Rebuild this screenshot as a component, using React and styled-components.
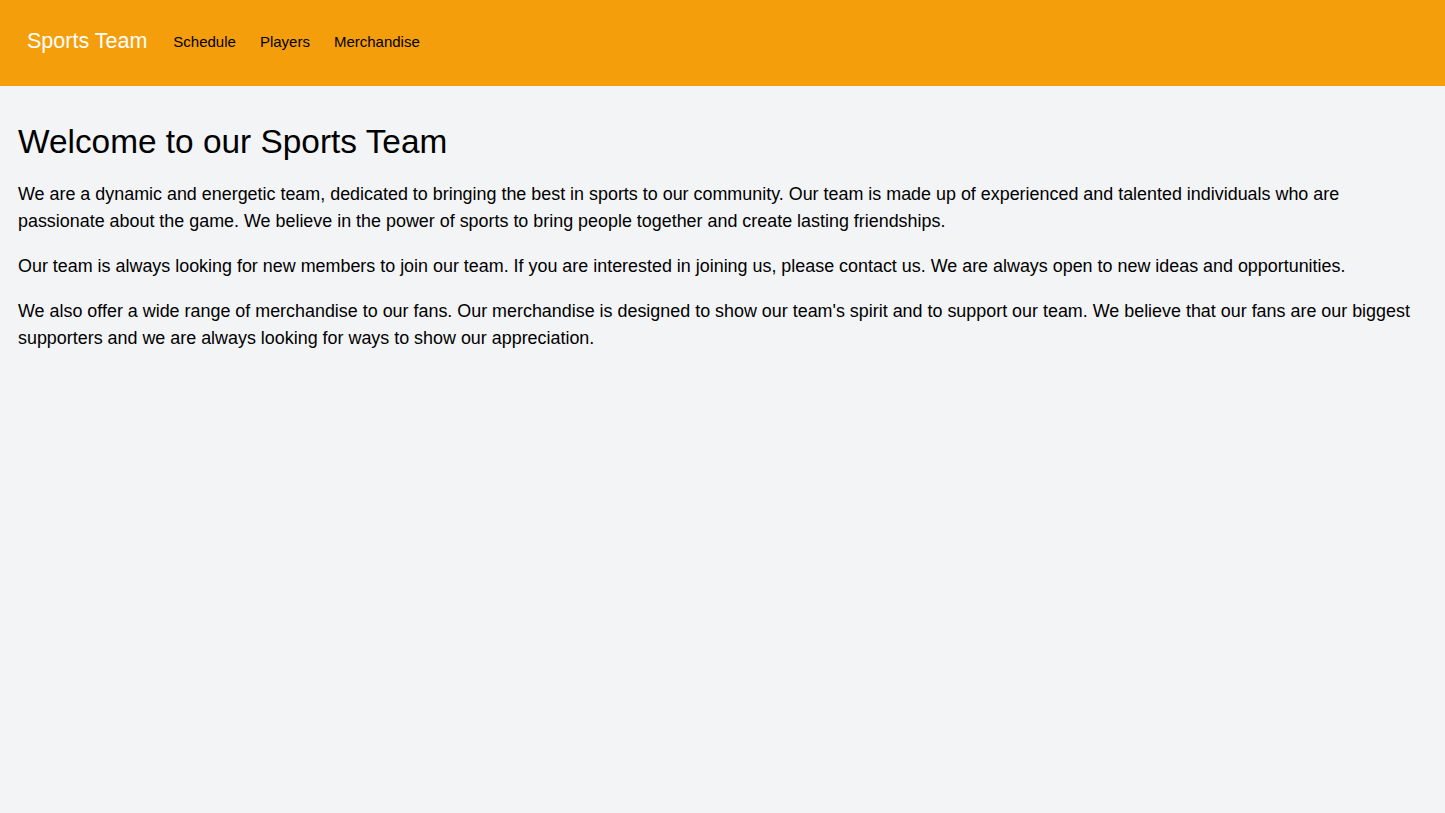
import React from 'react';
import styled, { createGlobalStyle } from 'styled-components';

const GlobalStyle = createGlobalStyle`
  html, body {
    margin: 0;
    padding: 0;
    background: #f3f4f6;
    font-family: "Liberation Sans", Arial, sans-serif;
    color: #000;
  }
`;

const NavBar = styled.nav`
  display: flex;
  align-items: center;
  height: 86px;
  padding: 0 24px 3px;
  box-sizing: border-box;
  background: #f59e0b;
`;

const Brand = styled.a`
  color: #fff;
  font-size: 21.5px;
  margin: 0 26px 0 3px;
  text-decoration: none;
`;

const NavLink = styled.a`
  color: #000;
  font-size: 15px;
  margin-right: 24px;
  text-decoration: none;
`;

const Main = styled.main`
  padding: 36px 18px;
`;

const Title = styled.h1`
  font-size: 33.4px;
  font-weight: 400;
  line-height: 40px;
  margin: 0 0 19px;
`;

const Para = styled.p`
  font-size: 17.92px;
  line-height: 27px;
  margin: 0 0 18px;
`;

const links = ['Schedule', 'Players', 'Merchandise'];

export default function App() {
  return (
    <>
      <GlobalStyle />
      <NavBar>
        <Brand href="#">Sports Team</Brand>
        {links.map((l) => (
          <NavLink key={l} href="#">{l}</NavLink>
        ))}
      </NavBar>
      <Main>
        <Title>Welcome to our Sports Team</Title>
        <Para>
          We are a dynamic and energetic team, dedicated to bringing the best in sports to our community. Our team is made up of experienced and talented individuals who are passionate about the game. We believe in the power of sports to bring people together and create lasting friendships.
        </Para>
        <Para>
          Our team is always looking for new members to join our team. If you are interested in joining us, please contact us. We are always open to new ideas and opportunities.
        </Para>
        <Para>
          We also offer a wide range of merchandise to our fans. Our merchandise is designed to show our team's spirit and to support our team. We believe that our fans are our biggest supporters and we are always looking for ways to show our appreciation.
        </Para>
      </Main>
    </>
  );
}
